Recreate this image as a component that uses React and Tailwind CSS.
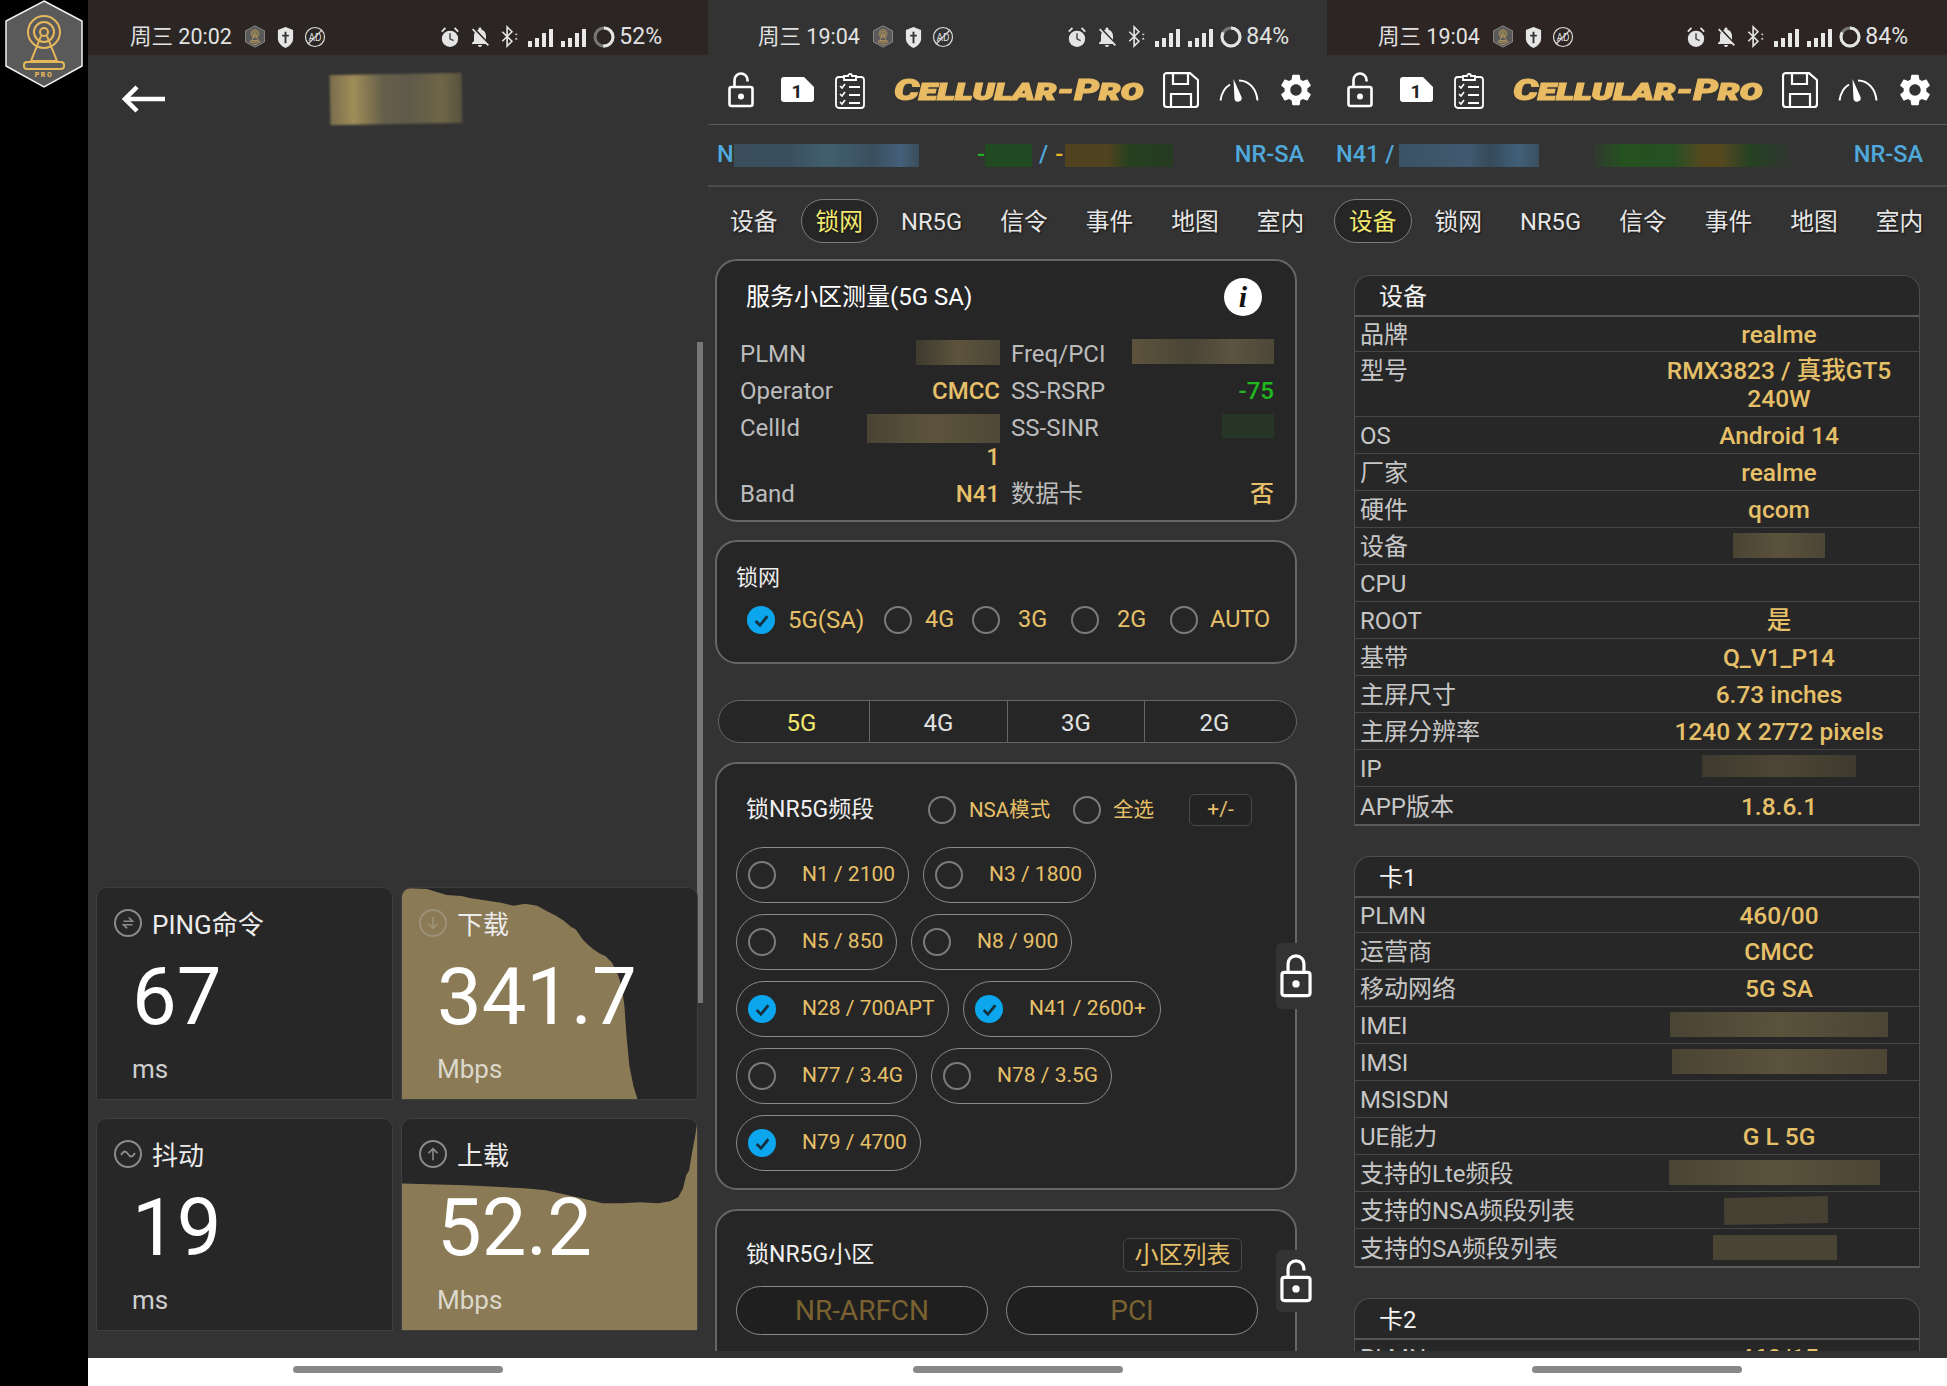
import { MdSettings, MdNotificationsOff } from "react-icons/md";

const gold = "text-[#e6c069]";

function HexLogo({ className }) {
  return (
    <svg viewBox="0 0 88 88" className={className}>
      <polygon points="44,1 82,21 82,66 44,87 6,66 6,21" fill="#5a5a5a" stroke="#f2f2f2" strokeWidth="1.5" />
      <g fill="none" stroke="#e6b85c" strokeWidth="2">
        <ellipse cx="44" cy="32" rx="16" ry="16" />
        <ellipse cx="44" cy="32" rx="10" ry="10" />
        <circle cx="44" cy="32" r="4" />
        <path d="M41 36 L31 61 H57 L47 36" />
        <rect x="24" y="62" width="40" height="7" rx="3" />
      </g>
      <text x="44" y="77" textAnchor="middle" fontSize="7" fontWeight="900" letterSpacing="1.5" fill="#e6b85c">PRO</text>
    </svg>
  );
}

function Signal() {
  return (
    <svg viewBox="0 0 25 20" className="w-[25px] h-[20px]" fill="#e8e8e8">
      <rect x="0" y="13" width="4" height="6" />
      <rect x="7" y="10" width="4" height="9" />
      <rect x="14" y="5" width="4" height="14" />
      <rect x="21" y="1" width="4" height="18" />
    </svg>
  );
}

function StatusBar({ time, pct, dash, barClass }) {
  return (
    <div className={`h-[55px] shrink-0 flex items-end pb-[4px] text-[21.5px] text-[#e2e2e2] ${barClass}`}>
      <span className="whitespace-nowrap leading-[28px]">{time}</span>
      <HexLogo className="w-[22px] h-[25px] ml-[12px] mb-[2px]" />
      <svg viewBox="0 0 20 24" className="w-[19px] h-[23px] ml-[10px] mb-[2px]">
        <path d="M10 1 L18 4 V13 C18 18 14 21 10 23 C6 21 2 18 2 13 V4 Z" fill="#e6e6e6" />
        <path d="M10 6 V18 M6.5 10 H13.5" stroke="#333" strokeWidth="2" />
      </svg>
      <svg viewBox="0 0 22 22" className="w-[22px] h-[22px] ml-[9px] mb-[3px]" fill="none" stroke="#dcdcdc" strokeWidth="1.2">
        <circle cx="11" cy="11" r="9.5" />
        <path d="M4 18 L18 4" />
        <text x="11" y="15" textAnchor="middle" fontSize="10" fill="#dcdcdc" stroke="none">AD</text>
      </svg>
      <span className="ml-auto flex items-end">
        <svg viewBox="0 0 22 24" className="w-[20px] h-[24px] mb-[2px]">
          <circle cx="11" cy="14" r="9" fill="#e4e4e4" />
          <path d="M11 8 V14 L15 16" stroke="#444" strokeWidth="1.6" fill="none" />
          <path d="M2 6 L6 2 M20 6 L16 2" stroke="#e4e4e4" strokeWidth="2" />
        </svg>
        <MdNotificationsOff className="w-[24px] h-[24px] ml-[8px] mb-[2px] text-[#e4e4e4]" />
        <svg viewBox="0 0 20 24" className="w-[20px] h-[23px] ml-[8px] mb-[3px]" fill="none" stroke="#e4e4e4" strokeWidth="1.7">
          <path d="M2 7 L12 17 L7 22 V2 L12 7 L2 17" />
          <path d="M15 9 h3 l-1.5 2 z M15 15 h3 l-1.5 -2 z" fill="#e4e4e4" stroke="none" />
        </svg>
        <span className="ml-[8px] mb-[3px]"><Signal /></span>
        <span className="ml-[8px] mb-[3px]"><Signal /></span>
        <svg viewBox="0 0 22 22" className="w-[22px] h-[22px] ml-[7px] mb-[3px]" fill="none" strokeWidth="3">
          <circle cx="11" cy="11" r="9" stroke="#777" />
          <circle cx="11" cy="11" r="9" stroke="#e4e4e4" strokeDasharray={dash} transform="rotate(-90 11 11)" />
        </svg>
        <span className="ml-[4px] text-[23px] leading-[28px]">{pct}</span>
      </span>
    </div>
  );
}

function Lock({ open, className = "w-[26px] h-[36px]" }) {
  return (
    <svg viewBox="0 0 26 36" className={className} fill="none" stroke="#fff" strokeWidth="2.6">
      <rect x="1.5" y="15" width="23" height="19" rx="2" />
      <circle cx="13" cy="24.5" r="3" fill="#fff" stroke="none" />
      {open ? <path d="M6.5 15 V8 a6.5 6.5 0 0 1 13 0 V9.5" /> : <path d="M6.5 15 V8 a6.5 6.5 0 0 1 13 0 V15" />}
    </svg>
  );
}

function AppHeader() {
  return (
    <div className="h-[70px] shrink-0 flex items-center pl-[20px] border-b border-[#5a5a5a]">
      <Lock open />
      <svg viewBox="0 0 33 25" className="w-[33px] h-[25px] ml-[27px]">
        <path d="M3 0 H23 L33 10 V22 a3 3 0 0 1 -3 3 H3 a3 3 0 0 1 -3 -3 V3 a3 3 0 0 1 3 -3 Z" fill="#fff" />
        <text x="16" y="21" textAnchor="middle" fontSize="19" fontWeight="700" fill="#222">1</text>
      </svg>
      <svg viewBox="0 0 30 38" className="w-[30px] h-[38px] ml-[21px]" fill="none" stroke="#fff" strokeWidth="1.8">
        <rect x="1" y="6" width="28" height="31" rx="3" />
        <path d="M9 9 V5 h4 a2 2 0 0 1 4 0 h4 v4 Z" fill="#333" />
        <path d="M5 15 l2 2 l3 -4 M5 23 l2 2 l3 -4 M5 31 l2 2 l3 -4" strokeWidth="1.6" />
        <path d="M14 16 H25 M14 24 H25 M14 32 H25" />
      </svg>
      <div className="w-[253px] ml-[27px] flex justify-center">
        <span className="scale-x-[1.36] text-[#e9bb63] text-[29px] leading-[36px] font-black italic [font-variant:small-caps] [-webkit-text-stroke:1px_#e9bb63] whitespace-nowrap">
          Cellular-Pro
        </span>
      </div>
      <svg viewBox="0 0 36 36" className="w-[36px] h-[36px] ml-[18px]" fill="none" stroke="#fff" strokeWidth="2.2">
        <path d="M4 1.2 H27 L35 8 V32 a3 3 0 0 1 -3 3 H4 a3 3 0 0 1 -3 -3 V4 a3 3 0 0 1 3 -3 Z" />
        <path d="M10 1.5 V12 H25 V1.5 M8 35 V22 H28 V35" />
      </svg>
      <svg viewBox="0 0 40 24" className="w-[40px] h-[24px] ml-[20px]" fill="none" stroke="#fff" strokeWidth="2">
        <path d="M1.5 22.5 C2.5 15 6 9.5 11 6.5 M20 2.5 C30 2.5 37.5 11 38.5 22.5" />
        <path d="M14.5 1 L22.5 19 a3.6 3.6 0 0 1 -7 2.2 Z" fill="#fff" stroke="none" />
      </svg>
      <MdSettings className="w-[38px] h-[38px] ml-[18px] text-white" />
    </div>
  );
}

function Blur({ className }) {
  return <div className={`shrink-0 ${className}`} />;
}

const tabs = ["设备", "锁网", "NR5G", "信令", "事件", "地图", "室内"];

function Tabs({ active }) {
  return (
    <div className="flex gap-[8px] pl-[7px] pt-[12px] shrink-0">
      {tabs.map((t) => (
        <div
          key={t}
          className={`h-[44px] px-[14px] pt-[3px] flex items-center text-[23.75px] rounded-full border whitespace-nowrap [text-shadow:1px_1px_2px_#111] ${
            t === active
              ? "border-[#7c7c7c] bg-[#262626] text-[#f3e96e]"
              : "border-transparent text-[#e6e6e6]"
          }`}
        >
          {t}
        </div>
      ))}
    </div>
  );
}

function Radio({ checked }) {
  if (checked) {
    return (
      <span className="w-[28px] h-[28px] shrink-0 rounded-full bg-[#0ba6ee] flex items-center justify-center">
        <svg viewBox="0 0 16 16" className="w-[17px] h-[17px]" fill="none" stroke="#14303f" strokeWidth="2.6">
          <path d="M2.5 8.5 L6.5 12.5 L13.5 4" />
        </svg>
      </span>
    );
  }
  return <span className="w-[28px] h-[28px] shrink-0 rounded-full border-2 border-[#7b7b7b]" />;
}

function Phone({ children }) {
  return <div className="relative w-[620px] h-full flex flex-col bg-[#333333] overflow-hidden">{children}</div>;
}

function HomeBar() {
  return (
    <div className="h-[28px] shrink-0 bg-white flex justify-center pt-[8px]">
      <div className="w-[210px] h-[7px] rounded-full bg-[#888888]" />
    </div>
  );
}

function StatCard({ icon, title, value, unit, chart, iconClass = "border-[#8b8b8b]", unitClass = "text-[#cfcfcf]" }) {
  return (
    <div className="relative h-[213px] bg-[#272727] border border-[#3e3e3e] rounded-t-[10px] overflow-hidden">
      {chart}
      <div className="relative flex flex-col pt-[20px]">
        <div className="flex items-center h-[30px] pl-[17px]">
          <span className={`w-[28px] h-[28px] rounded-full border-2 flex items-center justify-center ${iconClass}`}>{icon}</span>
          <span className="ml-[10px] translate-y-[2px] text-[26px] text-[#ececec] whitespace-nowrap">{title}</span>
        </div>
        <div className="mt-[18px] pl-[35px] text-[79.5px] leading-[82px] text-white">{value}</div>
        <div className={`mt-[16px] pl-[35px] text-[26px] leading-[30px] ${unitClass}`}>{unit}</div>
      </div>
    </div>
  );
}

function SpeedPhone() {
  return (
    <Phone>
      <StatusBar
        time="周三 20:02"
        pct="52%"
        dash="29 60"
        barClass="bg-[#2b2623] pl-[42px] pr-[46px]"
      />
      <div className="h-[88px] shrink-0 flex items-center pl-[34px]">
        <svg viewBox="0 0 43 28" className="w-[43px] h-[28px]" fill="none" stroke="#fff" strokeWidth="4.5">
          <path d="M43 14 H3 M15 2 L3 14 L15 26" />
        </svg>
        <Blur className="ml-[165px] w-[132px] h-[50px] -rotate-1 blur-[1px] bg-[linear-gradient(90deg,#7a6d4c,#a08d58_18%,#665f4a_40%,#5f5a4a_60%,#6f6547_85%,#57523f)]" />
      </div>
      {/* scroll thumb */}
      <div className="absolute right-[5px] top-[342px] w-[6px] h-[661px] bg-[#777777]" />
      <div className="mt-auto grid grid-cols-[297px_297px] gap-x-[8px] gap-y-[18px] pl-[8px] pb-[27px]">
        <StatCard
          title="PING命令"
          value="67"
          unit="ms"
          icon={
            <svg viewBox="0 0 20 20" className="w-[18px] h-[18px]" fill="none" stroke="#8b8b8b" strokeWidth="1.8">
              <path d="M5 8 H15 L11 4 M15 12 H5 L9 16" />
            </svg>
          }
        />
        <StatCard
          title="下载"
          value="341.7"
          unit="Mbps"
          iconClass="border-[#9c9278]"
          unitClass="text-[#dcd8cc]"
          chart={
            <svg viewBox="0 0 297 213" className="absolute inset-0 w-full h-full" preserveAspectRatio="none">
              <polygon
                points="0,0 25,1 45,7 60,8 68,10 88,13 100,15 112,18 124,16 136,18 147,24 155,28 163,33 170,39 175,42 182,52 187,57 193,62 199,66 205,69 211,75 216,84 219,92 222,104 224,120 226,149 229,180 233,200 237,213 0,213"
                fill="#8a7a55"
              />
            </svg>
          }
          icon={
            <svg viewBox="0 0 20 20" className="w-[18px] h-[18px]" fill="none" stroke="#9c9278" strokeWidth="1.8">
              <path d="M10 3 V16 M5 11 L10 16 L15 11" />
            </svg>
          }
        />
        <StatCard
          title="抖动"
          value="19"
          unit="ms"
          icon={
            <svg viewBox="0 0 20 20" className="w-[20px] h-[20px]" fill="none" stroke="#8b8b8b" strokeWidth="1.8">
              <path d="M3 11 C6 6 8 7 10 10 C12 13 14 14 17 9" />
            </svg>
          }
        />
        <StatCard
          title="上载"
          value="52.2"
          unit="Mbps"
          unitClass="text-[#dcd8cc]"
          chart={
            <svg viewBox="0 0 297 213" className="absolute inset-0 w-full h-full" preserveAspectRatio="none">
              <polygon
                points="0,65 64,67 123,70 145,72 163,76 185,81 202,85 220,85 240,84 258,85 270,83 278,79 283,70 286,57 289,52 292,34 295,18 297,5 297,213 0,213"
                fill="#8a7a55"
              />
            </svg>
          }
          icon={
            <svg viewBox="0 0 20 20" className="w-[18px] h-[18px]" fill="none" stroke="#8b8b8b" strokeWidth="1.8">
              <path d="M10 17 V4 M5 9 L10 4 L15 9" />
            </svg>
          }
        />
      </div>
      <HomeBar />
    </Phone>
  );
}

function Stat({ label, value, valueClass = gold }) {
  return (
    <div className="flex justify-between items-start py-[4px] leading-[29px]">
      <span className="text-[#bcbcbc]">{label}</span>
      <span className={`font-medium text-right ${valueClass}`}>{value}</span>
    </div>
  );
}

const netModes = [
  { label: "5G(SA)", on: true, cell: "w-[137px]", gap: "ml-[13px] text-[24px]" },
  { label: "4G", cell: "w-[88px]", gap: "ml-[13px] text-[23.5px]" },
  { label: "3G", cell: "w-[99px]", gap: "ml-[18px] text-[23.5px]" },
  { label: "2G", cell: "w-[99px]", gap: "ml-[18px] text-[23.5px]" },
  { label: "AUTO", cell: "", gap: "ml-[12px] text-[23.5px]" },
];

const bandRows = [
  [{ t: "N1 / 2100", w: "w-[173px]" }, { t: "N3 / 1800", w: "w-[173px]" }],
  [{ t: "N5 / 850", w: "w-[161px]" }, { t: "N8 / 900", w: "w-[161px]" }],
  [{ t: "N28 / 700APT", w: "w-[213px]", on: true }, { t: "N41 / 2600+", w: "w-[198px]", on: true }],
  [{ t: "N77 / 3.4G", w: "w-[181px]" }, { t: "N78 / 3.5G", w: "w-[181px]" }],
  [{ t: "N79 / 4700", w: "w-[185px]", on: true }],
];

const segments = [
  { t: "5G", w: "w-[151px] pl-[15px]", c: "text-[#f3e96e] border-r border-[#666666]" },
  { t: "4G", w: "w-[138px]", c: "text-[#e2e2e2] border-r border-[#666666]" },
  { t: "3G", w: "w-[137px]", c: "text-[#e2e2e2] border-r border-[#666666]" },
  { t: "2G", w: "flex-1 pr-[12px]", c: "text-[#e2e2e2]" },
];

function LockPhone() {
  return (
    <Phone>
      <StatusBar time="周三 19:04" pct="84%" dash="47 60" barClass="bg-[#333333] pl-[50px] pr-[39px]" />
      <AppHeader />
      <div className="h-[62px] shrink-0 flex items-center pl-[9px] pr-[24px] border-b-2 border-[#4c4c4c] text-[23.5px] font-medium text-[#4fa9dc]">
        <div className="w-[260px] flex items-center">
          <span>N</span>
          <Blur className="w-[185px] h-[23px] bg-[linear-gradient(90deg,#3a4e5c,#3a4f5e_30%,#41606f_50%,#3a4f5e_75%,#44607a_90%,#3a4e5c)]" />
        </div>
        <div className="flex items-center">
          <span className="text-[#22b022] w-[8px]">-</span>
          <Blur className="w-[47px] h-[23px] bg-[#224a22]" />
          <span className="mx-[7px]">/</span>
          <span className="text-[#e8b925] w-[10px]">-</span>
          <Blur className="w-[108px] h-[23px] bg-[linear-gradient(90deg,#50431f,#50431f_40%,#25401f_60%,#263a22)]" />
        </div>
        <span className="ml-auto">NR-SA</span>
      </div>
      <Tabs active="锁网" />
      <div className="mt-[16px] flex-1 min-h-0 overflow-hidden mb-[7px] pl-[7px] pr-[31px] flex flex-col text-[24px]">
        <section className="shrink-0 h-[263px] bg-[#262626] border-2 border-[#666666] rounded-[22px] px-[23px]">
          <div className="flex items-center h-[75px] pl-[6px] pr-[10px] text-white">
            <span className="-translate-y-[2px]">服务小区测量(5G SA)</span>
            <span className="ml-auto -translate-y-[2px] w-[38px] h-[38px] rounded-full bg-white flex items-center justify-center text-[#111] text-[30px] font-bold italic font-['Liberation_Serif',serif]">
              i
            </span>
          </div>
          <div className="grid grid-cols-[260px_263px] gap-x-[11px] items-start -mr-[11px]">
            <Stat label="PLMN" value={<Blur className="w-[84px] h-[25px] bg-[linear-gradient(90deg,#3e3a2e,#5d533d_50%,#4d4636)]" />} />
            <Stat label="Freq/PCI" value={<Blur className="w-[142px] h-[25px] -mt-[1px] bg-[linear-gradient(90deg,#5d533d,#4b4536_40%,#5c5340_70%,#4d4738)]" />} />
            <Stat label="Operator" value="CMCC" />
            <Stat label="SS-RSRP" value="-75" valueClass="text-[#1fb81f]" />
            <Stat
              label="CellId"
              value={
                <>
                  <Blur className="w-[133px] h-[29px] bg-[linear-gradient(90deg,#4a4434,#5d533c_50%,#4f4836)]" />
                  1
                </>
              }
            />
            <Stat label="SS-SINR" value={<Blur className="w-[52px] h-[24px] bg-[#263526]" />} />
            <Stat label="Band" value="N41" />
            <Stat label="数据卡" value="否" />
          </div>
        </section>

        <section className="shrink-0 mt-[18px] h-[124px] bg-[#262626] border-2 border-[#666666] rounded-[22px] pl-[19px] pt-[21px]">
          <div className="text-[22px] leading-[30px] text-[#eeeeee]">锁网</div>
          <div className="mt-[9px] ml-[11px] flex items-center">
            {netModes.map((m) => (
              <div key={m.label} className={`flex items-center ${m.cell}`}>
                <Radio checked={m.on} />
                <span className={`${m.gap} ${gold}`}>{m.label}</span>
              </div>
            ))}
          </div>
        </section>

        <div className="shrink-0 mt-[36px] ml-[3px] h-[43px] flex rounded-full border border-[#666666] bg-[#262626] overflow-hidden">
          {segments.map((s) => (
            <div key={s.t} className={`flex items-center justify-center pt-[2px] ${s.w} ${s.c}`}>{s.t}</div>
          ))}
        </div>

        <section className="relative shrink-0 mt-[19px] h-[428px] bg-[#262626] border-2 border-[#666666] rounded-[22px] pl-[19px]">
          <div className="flex items-center h-[64px] mt-[14px] text-[23px]">
            <span className="ml-[10px] w-[182px] text-[#f0f0f0] whitespace-nowrap">锁NR5G频段</span>
            <Radio />
            <span className={`ml-[13px] w-[104px] text-[20.5px] whitespace-nowrap ${gold}`}>NSA模式</span>
            <Radio />
            <span className={`ml-[12px] text-[20.5px] ${gold}`}>全选</span>
            <span className={`ml-[35px] w-[63px] h-[32px] flex items-center justify-center rounded-md border border-[#484848] bg-[#232323] ${gold} text-[21px]`}>+/-</span>
          </div>
          <div className="flex flex-col gap-[11px] mt-[5px]">
            {bandRows.map((row, i) => (
              <div key={i} className="flex gap-[14px]">
                {row.map((b) => (
                  <div key={b.t} className={`h-[56px] flex items-center pl-[11px] rounded-full border border-[#8a8a8a] whitespace-nowrap ${b.w}`}>
                    <Radio checked={b.on} />
                    <span className={`ml-[26px] text-[21px] ${gold}`}>{b.t}</span>
                  </div>
                ))}
              </div>
            ))}
          </div>
          <div className="absolute -right-[21px] top-[179px] h-[66px] w-[40px] flex items-center justify-center bg-[#333333] rounded-md">
            <Lock className="w-[32px] h-[44px]" />
          </div>
        </section>

        <section className="relative shrink-0 mt-[19px] h-[170px] bg-[#262626] border-2 border-[#666666] rounded-[22px] pl-[19px]">
          <div className="flex items-center mt-[27px] h-[34px] text-[23px]">
            <span className="ml-[10px] text-[#f0f0f0]">锁NR5G小区</span>
            <span className={`ml-auto mr-[53px] h-[34px] w-[119px] flex items-center justify-center rounded-md border border-[#484848] bg-[#232323] text-[24px] ${gold}`}>小区列表</span>
          </div>
          <div className="flex gap-[18px] mt-[14px] text-[28px] text-[#7a6230]">
            <div className="w-[252px] h-[49px] rounded-full border border-[#8a8a8a] bg-[#1f1f1f] flex items-center justify-center">NR-ARFCN</div>
            <div className="w-[252px] h-[49px] rounded-full border border-[#8a8a8a] bg-[#1f1f1f] flex items-center justify-center">PCI</div>
          </div>
          <div className="absolute -right-[21px] top-[39px] h-[62px] w-[40px] flex items-center justify-center bg-[#333333] rounded-md">
            <Lock open className="w-[32px] h-[44px]" />
          </div>
        </section>
      </div>
      <HomeBar />
    </Phone>
  );
}

const brownA = "bg-[linear-gradient(90deg,#4a4434,#5b523c_50%,#4c4535)]";

const deviceRows = [
  ["品牌", "realme"],
  ["型号", <>RMX3823 / 真我GT5<br />240W</>],
  ["OS", "Android 14"],
  ["厂家", "realme"],
  ["硬件", "qcom"],
  ["设备", <Blur className={`w-[92px] h-[25px] mx-auto ${brownA}`} />],
  ["CPU", ""],
  ["ROOT", "是"],
  ["基带", "Q_V1_P14"],
  ["主屏尺寸", "6.73 inches"],
  ["主屏分辨率", "1240 X 2772 pixels"],
  ["IP", <Blur className="w-[154px] h-[22px] mx-auto bg-[linear-gradient(90deg,#3f3a2f,#4d4636_50%,#3f3a2f)]" />],
  ["APP版本", "1.8.6.1"],
];

const simRows = [
  ["PLMN", "460/00"],
  ["运营商", "CMCC"],
  ["移动网络", "5G SA"],
  ["IMEI", <Blur className={`w-[218px] h-[25px] mx-auto ${brownA}`} />],
  ["IMSI", <Blur className={`w-[215px] h-[25px] mx-auto ${brownA}`} />],
  ["MSISDN", ""],
  ["UE能力", "G L 5G"],
  ["支持的Lte频段", <Blur className={`w-[211px] h-[25px] ml-[30px] ${brownA}`} />],
  ["支持的NSA频段列表", <Blur className="w-[104px] h-[27px] ml-[85px] -rotate-1 bg-[#464033]" />],
  ["支持的SA频段列表", <Blur className="w-[124px] h-[25px] ml-[74px] bg-[#4a4435]" />],
];

function InfoTable({ title, rows }) {
  return (
    <section className="shrink-0 bg-[#272727] border-x border-t border-[#4e4e4e] rounded-t-[16px] border-b-2 border-b-[#5a5a5a]">
      <div className="h-[41px] pl-[24px] pt-[3px] flex items-center text-[#f4f4f4] border-b-2 border-[#565656]">{title}</div>
      {rows.map(([label, value], i) => {
        const edge = i === 0 ? "py-[3px]" : i === rows.length - 1 ? "pt-[5px] pb-[4px] border-b-0" : "py-[4px]";
        return (
          <div key={i} className={`grid grid-cols-[284px_1fr] leading-[28px] border-b border-[#464646] ${edge}`}>
            <span className="pl-[5px] translate-y-[1px] text-[#c6c6c6] whitespace-nowrap">{label}</span>
            <span className={`text-center translate-y-[1px] text-[24.5px] font-medium ${gold}`}>{value}</span>
          </div>
        );
      })}
    </section>
  );
}

function DevicePhone() {
  return (
    <Phone>
      <StatusBar time="周三 19:04" pct="84%" dash="47 60" barClass="bg-[#2c2523] pl-[51px] pr-[39px]" />
      <AppHeader />
      <div className="h-[62px] shrink-0 flex items-center pl-[9px] pr-[24px] border-b-2 border-[#4c4c4c] text-[23.5px] font-medium text-[#4fa9dc]">
        <div className="w-[258px] flex items-center">
          <span>N41 /</span>
          <Blur className="ml-[5px] w-[140px] h-[23px] bg-[linear-gradient(90deg,#3a5264,#405a70_50%,#364a5a_65%,#416078_85%,#3a5060)]" />
        </div>
        <Blur className="w-[196px] h-[23px] bg-[linear-gradient(90deg,#303a2e,#25521f_15%,#255024_40%,#54481f_55%,#54481f_65%,#254223_80%,#303530)]" />
        <span className="ml-auto">NR-SA</span>
      </div>
      <Tabs active="设备" />
      <div className="mt-[32px] flex-1 min-h-0 overflow-hidden mb-[7px] mx-[27px] flex flex-col text-[24px]">
        <InfoTable title="设备" rows={deviceRows} />
        <div className="h-[30px] shrink-0" />
        <InfoTable title="卡1" rows={simRows} />
        <div className="h-[30px] shrink-0" />
        <InfoTable title="卡2" rows={[["PLMN", "460/15"]]} />
      </div>
      <HomeBar />
    </Phone>
  );
}

export default function App() {
  return (
    <div className="w-[1947px] h-[1386px] flex bg-black font-[Roboto,'Noto_Sans_CJK_SC',sans-serif] overflow-hidden">
      <div className="w-[88px] shrink-0">
        <HexLogo className="w-[88px] h-[88px]" />
      </div>
      <SpeedPhone />
      <div className="w-[619px] shrink-0"><LockPhone /></div>
      <DevicePhone />
    </div>
  );
}
